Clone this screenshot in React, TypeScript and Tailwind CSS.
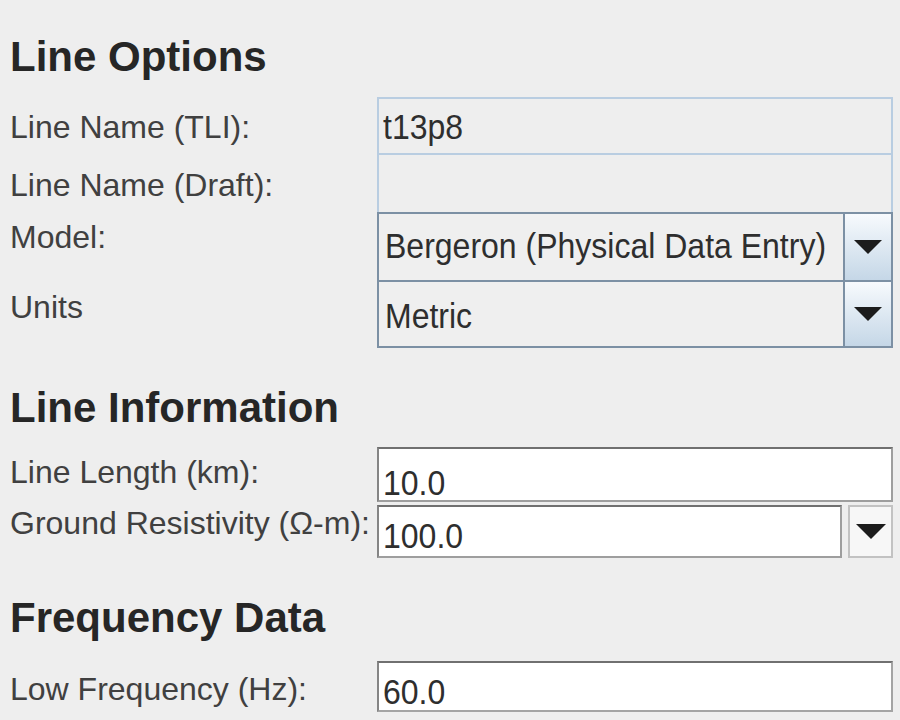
import React from "react";

const labelClass = "w-[367px] shrink-0 text-[32px] leading-[32px] text-[#404040] whitespace-nowrap";
const valueClass = "inline-block scale-y-[1.08] text-[32px] leading-[32px] text-[#2e2e2e] whitespace-nowrap";
const headingClass = "text-[42px] leading-[42px] font-bold text-[#262626] whitespace-nowrap";

function Triangle({ w = 28, h = 14 }: { w?: number; h?: number }) {
  return (
    <svg width={w} height={h} viewBox={`0 0 ${w} ${h}`}>
      <path d={`M0 0H${w}L${w / 2} ${h}Z`} fill="#1c1c1c" />
    </svg>
  );
}

export default function App() {
  return (
    <div className="h-[720px] w-[900px] overflow-hidden bg-[#eeeeee] pl-[10px] pr-[7px] font-['Liberation_Sans',Arial,sans-serif]">
      {/* Line Options */}
      <h2 className={`mt-[36px] ${headingClass}`}>Line Options</h2>
      <div className="mt-[19px] flex flex-col">
        <div className="flex h-[58px]">
          <div className={`${labelClass} pt-[14px]`}>Line Name (TLI):</div>
          <div className="flex-1 border-2 border-[#b9cde1] bg-[#eeeeee] pl-[4px] pt-[12px]">
            <span className={valueClass}>t13p8</span>
          </div>
        </div>
        <div className="flex h-[57px]">
          <div className={`${labelClass} pt-[14px]`}>Line Name (Draft):</div>
          <div className="flex-1 border-x-2 border-[#b9cde1] bg-[#eeeeee]" />
        </div>
        <div className="flex h-[70px]">
          <div className={`${labelClass} pt-[9px]`}>Model:</div>
          <div className="flex flex-1 border-2 border-[#7c90a4] bg-[#efefef]">
            <div className="flex-1 pl-[6px] pt-[16px]">
              <span className={valueClass}>Bergeron (Physical Data Entry)</span>
            </div>
            <div className="flex w-[48px] items-center justify-center border-l-2 border-[#7c90a4] bg-linear-to-b from-[#f7fafd] to-[#c5d7e7]">
              <Triangle />
            </div>
          </div>
        </div>
        <div className="flex h-[66px]">
          <div className={`${labelClass} pt-[9px]`}>Units</div>
          <div className="flex flex-1 border-2 border-t-0 border-[#7c90a4] bg-[#efefef]">
            <div className="flex-1 pl-[6px] pt-[18px]">
              <span className={valueClass}>Metric</span>
            </div>
            <div className="flex w-[48px] items-center justify-center border-l-2 border-[#7c90a4] bg-linear-to-b from-[#f7fafd] to-[#c5d7e7]">
              <Triangle />
            </div>
          </div>
        </div>
      </div>

      {/* Line Information */}
      <h2 className={`mt-[39px] ${headingClass}`}>Line Information</h2>
      <div className="mt-[18px] flex flex-col">
        <div className="flex h-[55px]">
          <div className={`${labelClass} pt-[9px]`}>Line Length (km):</div>
          <div className="flex-1 border-2 border-[#9e9e9e] border-l-[#858585] border-t-[#707070] bg-white pl-[4px] pt-[18px]">
            <span className={valueClass}>10.0</span>
          </div>
        </div>
        <div className="mt-[3px] flex h-[53px]">
          <div className={`${labelClass} pt-[2px]`}>Ground Resistivity (Ω-m):</div>
          <div className="flex flex-1 gap-[6px]">
            <div className="flex-1 border-2 border-[#9e9e9e] border-l-[#858585] border-t-[#707070] bg-white pl-[4px] pt-[13px]">
              <span className={valueClass}>100.0</span>
            </div>
            <div className="flex w-[45px] items-center justify-center border-2 border-[#c2c2c2] bg-[#f7f7f7]">
              <Triangle w={30} h={15} />
            </div>
          </div>
        </div>
      </div>

      {/* Frequency Data */}
      <h2 className={`mt-[39px] ${headingClass}`}>Frequency Data</h2>
      <div className="mt-[22px] flex h-[51px]">
        <div className={`${labelClass} pt-[12px]`}>Low Frequency (Hz):</div>
        <div className="flex-1 border-2 border-[#a4a4a4] border-l-[#858585] border-t-[#707070] bg-white pl-[4px] pt-[13px]">
          <span className={valueClass}>60.0</span>
        </div>
      </div>
    </div>
  );
}
